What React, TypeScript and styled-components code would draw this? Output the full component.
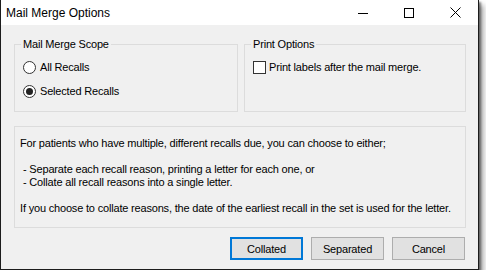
import React from 'react';
import styled, { createGlobalStyle } from 'styled-components';

const GlobalStyle = createGlobalStyle`
  html, body {
    margin: 0;
    padding: 0;
    background: #ffffff;
  }
  body {
    font-family: "Liberation Sans", Arial, sans-serif;
    color: #000000;
  }
`;

const App = () => {
  return (
    <>
      <GlobalStyle />
      <Window>
        <TitleBar>
          <TitleText>Mail Merge Options</TitleText>
          <CaptionButton>
            <svg width="10" height="10" viewBox="0 0 10 10">
              <line x1="0" y1="5.5" x2="10" y2="5.5" stroke="#000" strokeWidth="1" />
            </svg>
          </CaptionButton>
          <CaptionButton>
            <svg width="10" height="10" viewBox="0 0 10 10">
              <rect x="0.5" y="0.5" width="9" height="9" fill="none" stroke="#000" strokeWidth="1" />
            </svg>
          </CaptionButton>
          <CaptionButton>
            <svg width="11" height="11" viewBox="0 0 11 11">
              <path d="M0.5 0.5 L10.5 10.5 M10.5 0.5 L0.5 10.5" stroke="#000" strokeWidth="1" />
            </svg>
          </CaptionButton>
        </TitleBar>

        <Body>
          <TopRow>
            <Group $width={224}>
              <Legend>Mail Merge Scope</Legend>
              <OptionRow>
                <Radio />
                <span>All Recalls</span>
              </OptionRow>
              <OptionRow>
                <Radio $checked />
                <span>Selected Recalls</span>
              </OptionRow>
            </Group>
            <Group $width={222}>
              <Legend>Print Options</Legend>
              <OptionRow $gap={3}>
                <Checkbox />
                <span>Print labels after the mail merge.</span>
              </OptionRow>
            </Group>
          </TopRow>

          <InfoBox>
            <Para>For patients who have multiple, different recalls due, you can choose to either;</Para>
            <Para $indent>
              - Separate each recall reason, printing a letter for each one, or
              <br />
              - Collate all recall reasons into a single letter.
            </Para>
            <Para>If you choose to collate reasons, the date of the earliest recall in the set is used for the letter.</Para>
          </InfoBox>

          <ButtonRow>
            <Button $primary>Collated</Button>
            <Button>Separated</Button>
            <Button>Cancel</Button>
          </ButtonRow>
        </Body>
      </Window>
    </>
  );
};

const Window = styled.div`
  width: 479px;
  height: 270px;
  box-sizing: border-box;
  border: 1px solid #1c1c1c;
  border-top: none;
  background: #f0f0f0;
  box-shadow: 2px 2px 2px rgba(0, 0, 0, 0.45), 5px 5px 5px rgba(0, 0, 0, 0.3);
  display: flex;
  flex-direction: column;
`;

const TitleBar = styled.div`
  height: 25px;
  flex-shrink: 0;
  background: #ffffff;
  display: flex;
  align-items: center;
  padding-left: 5px;
  font-size: 12px;
`;

const TitleText = styled.div`
  flex: 1;
`;

const CaptionButton = styled.div`
  width: 46px;
  height: 25px;
  display: flex;
  align-items: center;
  justify-content: center;
`;

const Body = styled.div`
  padding: 12px 12px 0 13px;
  display: flex;
  flex-direction: column;
  font-size: 11px;
  letter-spacing: -0.18px;
`;

const TopRow = styled.div`
  display: flex;
  gap: 6px;
`;

const Group = styled.fieldset<{ $width: number }>`
  width: ${(p) => p.$width}px;
  box-sizing: border-box;
  min-width: 0;
  margin: 0;
  padding: 4px 8px 8px 8px;
  border: 1px solid #dcdcdc;
`;

const Legend = styled.legend`
  padding: 0 2px;
  margin-left: -2px;
  line-height: 14px;
  font-size: 11px;
`;

const OptionRow = styled.div<{ $gap?: number }>`
  height: 24px;
  display: flex;
  align-items: center;
  gap: ${(p) => p.$gap ?? 4}px;
`;

const Radio = styled.span<{ $checked?: boolean }>`
  width: 13px;
  height: 13px;
  box-sizing: border-box;
  border: 1px solid #333333;
  border-radius: 50%;
  background: #ffffff;
  display: flex;
  align-items: center;
  justify-content: center;

  &::after {
    content: '';
    width: 7px;
    height: 7px;
    border-radius: 50%;
    background: #222222;
    display: ${(p) => (p.$checked ? 'block' : 'none')};
  }
`;

const Checkbox = styled.span`
  width: 13px;
  height: 13px;
  box-sizing: border-box;
  border: 1px solid #333333;
  background: #ffffff;
`;

const InfoBox = styled.div`
  margin-top: 14px;
  height: 102px;
  box-sizing: border-box;
  border: 1px solid #dcdcdc;
  padding: 10px 5px;
  line-height: 13px;
`;

const Para = styled.div<{ $indent?: boolean }>`
  margin-bottom: 13px;
  padding-left: ${(p) => (p.$indent ? 3 : 0)}px;
  white-space: nowrap;

  &:last-child {
    margin-bottom: 0;
  }
`;

const ButtonRow = styled.div`
  margin-top: 9px;
  display: flex;
  justify-content: flex-end;
  gap: 8px;
  padding-right: 1px;
`;

const Button = styled.button<{ $primary?: boolean }>`
  width: 73px;
  height: 23px;
  box-sizing: border-box;
  margin: 0;
  padding: 0;
  background: #e1e1e1;
  border: ${(p) => (p.$primary ? '2px solid #0078d7' : '1px solid #adadad')};
  font-family: "Liberation Sans", Arial, sans-serif;
  font-size: 11px;
  letter-spacing: -0.18px;
  color: #000000;
`;

export default App;
